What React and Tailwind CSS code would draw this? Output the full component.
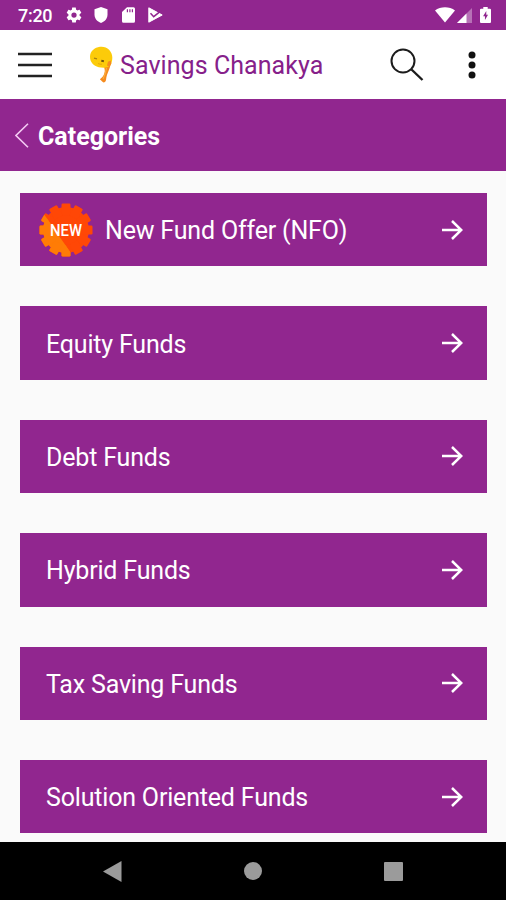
const categories = [
  { id: 1, title: "New Fund Offer (NFO)", isNew: true },
  { id: 2, title: "Equity Funds" },
  { id: 3, title: "Debt Funds" },
  { id: 4, title: "Hybrid Funds" },
  { id: 5, title: "Tax Saving Funds" },
  { id: 6, title: "Solution Oriented Funds" },
];

const teeth = [0, 30, 60, 90, 120, 150, 180, 210, 240, 270, 300, 330];

const StatusBar = () => (
  <div className="flex h-[30px] shrink-0 items-center bg-[#91268f] pl-[18px] pr-[15px] text-white">
    <span className="w-[47px] pt-[2px] text-[18px] font-medium leading-[30px] tracking-[-0.3px]">
      7:20
    </span>
    <svg width="18" height="18" viewBox="0 0 24 24" fill="currentColor">
      <path d="M19.4 13c0-.3.1-.6.1-1s0-.7-.1-1l2.1-1.7c.2-.1.3-.4.1-.6l-2-3.5c-.1-.2-.4-.3-.6-.2l-2.5 1c-.5-.4-1.1-.7-1.7-1L14.4 2.400C14.400 2.200 14.200 2 14 2h-4c-.2 0-.4.2-.5.4L9.200 5.100c-.6.2-1.200.6-1.700 1l-2.500-1c-.2-.1-.5 0-.6.2l-2 3.500c-.1.200-.1.500.1.600L4.600 11c0 .3-.1.600-.1 1s0 .7.1 1l-2.100 1.700c-.2.100-.2.400-.1.600l2 3.500c.1.200.4.300.6.200l2.500-1c.5.400 1.100.7 1.700 1l.4 2.600c0 .2.200.4.400.4h4c.2 0 .4-.2.500-.4l.4-2.700c.6-.2 1.200-.6 1.700-1l2.500 1c.2.100.5 0 .6-.2l2-3.500c.1-.2.100-.5-.1-.6zM12 15.500a3.500 3.500 0 1 1 0-7 3.500 3.500 0 0 1 0 7z" />
    </svg>
    <svg className="ml-[11px]" width="14" height="16" viewBox="0 0 14 16" fill="currentColor">
      <path d="M7 0l6.500 2.300V7.500c0 4-2.500 7-6.500 8.500C3 14.500.5 11.500.5 7.500V2.300z" />
    </svg>
    <svg className="ml-[14px]" width="13" height="16" viewBox="0 0 13 16">
      <path d="M5 .3h6.500A1.500 1.500 0 0 1 13 1.800v12.400a1.500 1.500 0 0 1-1.500 1.500h-10A1.500 1.500 0 0 1 0 14.200V5z" fill="#fff" />
      <path d="M5.400 2.200v3M7.900 2.200v3M10.400 2.200v3" stroke="#91268f" strokeWidth="1.200" />
    </svg>
    <svg className="ml-[13px]" width="15" height="16" viewBox="0 0 15 16">
      <path d="M.8.800L14.200 8 .8 15.200z" fill="#fff" stroke="#fff" strokeLinejoin="round" />
      <path d="M2.500 6.200l3.200 3.500 7.500-6" fill="none" stroke="#91268f" strokeWidth="1.500" />
    </svg>
    <svg className="ml-auto" width="20" height="16" viewBox="0 0 20 16" fill="currentColor">
      <path d="M0 3.500C5.500-.7 14.500-.7 20 3.500L10 15.500z" />
    </svg>
    <svg className="ml-[2px]" width="15" height="15" viewBox="0 0 15 15">
      <path d="M0 15L15 0v15z" fill="#fff" opacity=".35" />
      <path d="M0 15L9.500 5.500V15z" fill="#fff" />
    </svg>
    <svg className="ml-[8px]" width="11" height="16" viewBox="0 0 10 16" preserveAspectRatio="none">
      <path d="M3 0h4v1.700h2a1 1 0 0 1 1 1V15a1 1 0 0 1-1 1H1a1 1 0 0 1-1-1V2.700a1 1 0 0 1 1-1h2z" fill="#fff" />
      <path d="M5.700 4L2.800 9.300h1.700V13l2.800-5.300H5.700z" fill="#91268f" />
    </svg>
  </div>
);

const Logo = () => (
  <svg className="ml-[37px]" width="26" height="38" viewBox="0 0 26 38">
    <path
      d="M21.500 14c1 3-.3 7-1.800 10.500-1.500 3.500-2.200 5.500-2.700 9.500-.3 2-2.300 3.200-3.500 1.800-.8-1-1.700-1.400-2.600-2.600 2.500-1.700 4.200-4 4.800-7.500.4-2.500-.8-3.500-.4-5.700z"
      fill="#f58b1f"
    />
    <path d="M17.500 22c-.6 4-1.500 7-3.500 11" fill="none" stroke="#fbad3c" strokeWidth="1.200" />
    <path
      d="M11 .8C17.500-.2 23.400 5 23.300 11.500c0 3.800-1 8.300-4.300 9.500-2.500 1-6.500.6-9.300.2C4.500 20 1 16 1 10.800 1.200 5 5.500 1.600 11 .8z"
      fill="#fccb0a"
    />
    <path d="M21.800 14.500l-2.800 1.300-1 3.700 2.300 1.200 2-3z" fill="#f58b1f" />
    <path d="M5 12.200l3 .7" stroke="#a98212" strokeWidth="1.200" />
    <path d="M12.300 14.800l2.600.4" stroke="#6f5410" strokeWidth="2" />
    <path d="M9 17.500q2 1 4 .7" fill="none" stroke="#e7a90c" />
  </svg>
);

const NewBadge = () => (
  <svg width="54" height="54" viewBox="0 0 54 54">
    <defs>
      <clipPath id="badgeShade">
        <path d="M0 4L36 56H0z" />
      </clipPath>
      <g id="badgeShape">
        <circle cx="27" cy="27" r="23" />
        {teeth.map((angle) => (
          <rect
            key={angle}
            x="22.500"
            y="0.500"
            width="9"
            height="12"
            rx="1.200"
            transform={`rotate(${angle} 27 27)`}
          />
        ))}
      </g>
    </defs>
    <use href="#badgeShape" fill="#ff4706" />
    <g clipPath="url(#badgeShade)">
      <use href="#badgeShape" fill="#ff7c06" />
    </g>
    <text
      x="27"
      y="33"
      textAnchor="middle"
      textLength="32"
      lengthAdjust="spacingAndGlyphs"
      fill="#fff"
      className="text-[16px] font-medium"
    >
      NEW
    </text>
  </svg>
);

const Header = () => (
  <header className="flex h-[69px] shrink-0 items-center bg-white">
    <svg className="ml-[18px]" width="34" height="26" viewBox="0 0 34 26" stroke="#222" strokeWidth="2.500">
      <path d="M0 2h34M0 13h34M0 24h34" />
    </svg>
    <Logo />
    <h1 className="ml-[5px] w-[268px] whitespace-nowrap pt-[3px] text-[25px] leading-[30px] tracking-[0.06px] text-[#86208a]">
      Savings Chanakya
    </h1>
    <svg className="ml-[2px]" width="34" height="34" viewBox="0 0 34 34" fill="none" stroke="#1c1c1c" strokeWidth="2">
      <circle cx="13" cy="13" r="11.500" />
      <path d="M21.500 21.500L32.500 32" strokeWidth="2.400" />
    </svg>
    <svg className="ml-[44px]" width="8" height="28" viewBox="0 0 8 28" fill="#111">
      <circle cx="4" cy="4" r="3.500" />
      <circle cx="4" cy="14" r="3.500" />
      <circle cx="4" cy="24" r="3.500" />
    </svg>
  </header>
);

const CategoryCard = ({ title, isNew }) => (
  <li
    className={
      isNew
        ? "flex h-[73.4px] shrink-0 items-center bg-[#91268f] pl-[19px] pr-[24px] text-white"
        : "flex h-[73.4px] shrink-0 items-center bg-[#91268f] pl-[26px] pr-[24px] text-white"
    }
  >
    {isNew && <NewBadge />}
    <span
      className={
        isNew
          ? "ml-[12px] whitespace-nowrap pt-[3px] text-[25px] leading-[30px] tracking-[-0.18px]"
          : "whitespace-nowrap pt-[3px] text-[25px] leading-[30px] tracking-[-0.18px]"
      }
    >
      {title}
    </span>
    <svg className="ml-auto" width="21" height="20" viewBox="0 0 21 20" fill="none" stroke="#fff" strokeWidth="2.500">
      <path d="M0 10h19M10 1l9.300 9L10 19" />
    </svg>
  </li>
);

const NavBar = () => (
  <nav className="flex h-[58px] shrink-0 items-center justify-between bg-black pl-[103px] pr-[103px]">
    <svg width="19" height="21" viewBox="0 0 19 21" fill="#9b9b9b">
      <path d="M0 10.500L18.500 0v21z" />
    </svg>
    <div className="h-[18px] w-[18px] rounded-full bg-[#9b9b9b]" />
    <div className="h-[19px] w-[19px] rounded-[1px] bg-[#9b9b9b]" />
  </nav>
);

const App = () => {
  return (
    <div className="flex h-[900px] w-[506px] flex-col overflow-hidden bg-[#fafafa] font-['Roboto',sans-serif]">
      <StatusBar />
      <Header />
      <div className="flex h-[72px] shrink-0 items-center bg-[#91268f] pl-[15px] text-white">
        <svg width="14" height="25" viewBox="0 0 14 25" fill="none" stroke="#f3c9f2" strokeWidth="1.600">
          <path d="M13 .8L1 12.500 13 24.200" />
        </svg>
        <h2 className="ml-[9px] pt-[4px] text-[25px] font-bold leading-[30px]">Categories</h2>
      </div>
      <main className="min-h-0 flex-1 overflow-hidden pl-[20px] pr-[19px] pt-[22px]">
        <ul className="flex flex-col gap-10">
          {categories.map((item) => (
            <CategoryCard key={item.id} title={item.title} isNew={item.isNew} />
          ))}
        </ul>
      </main>
      <NavBar />
    </div>
  );
};

export default App;
